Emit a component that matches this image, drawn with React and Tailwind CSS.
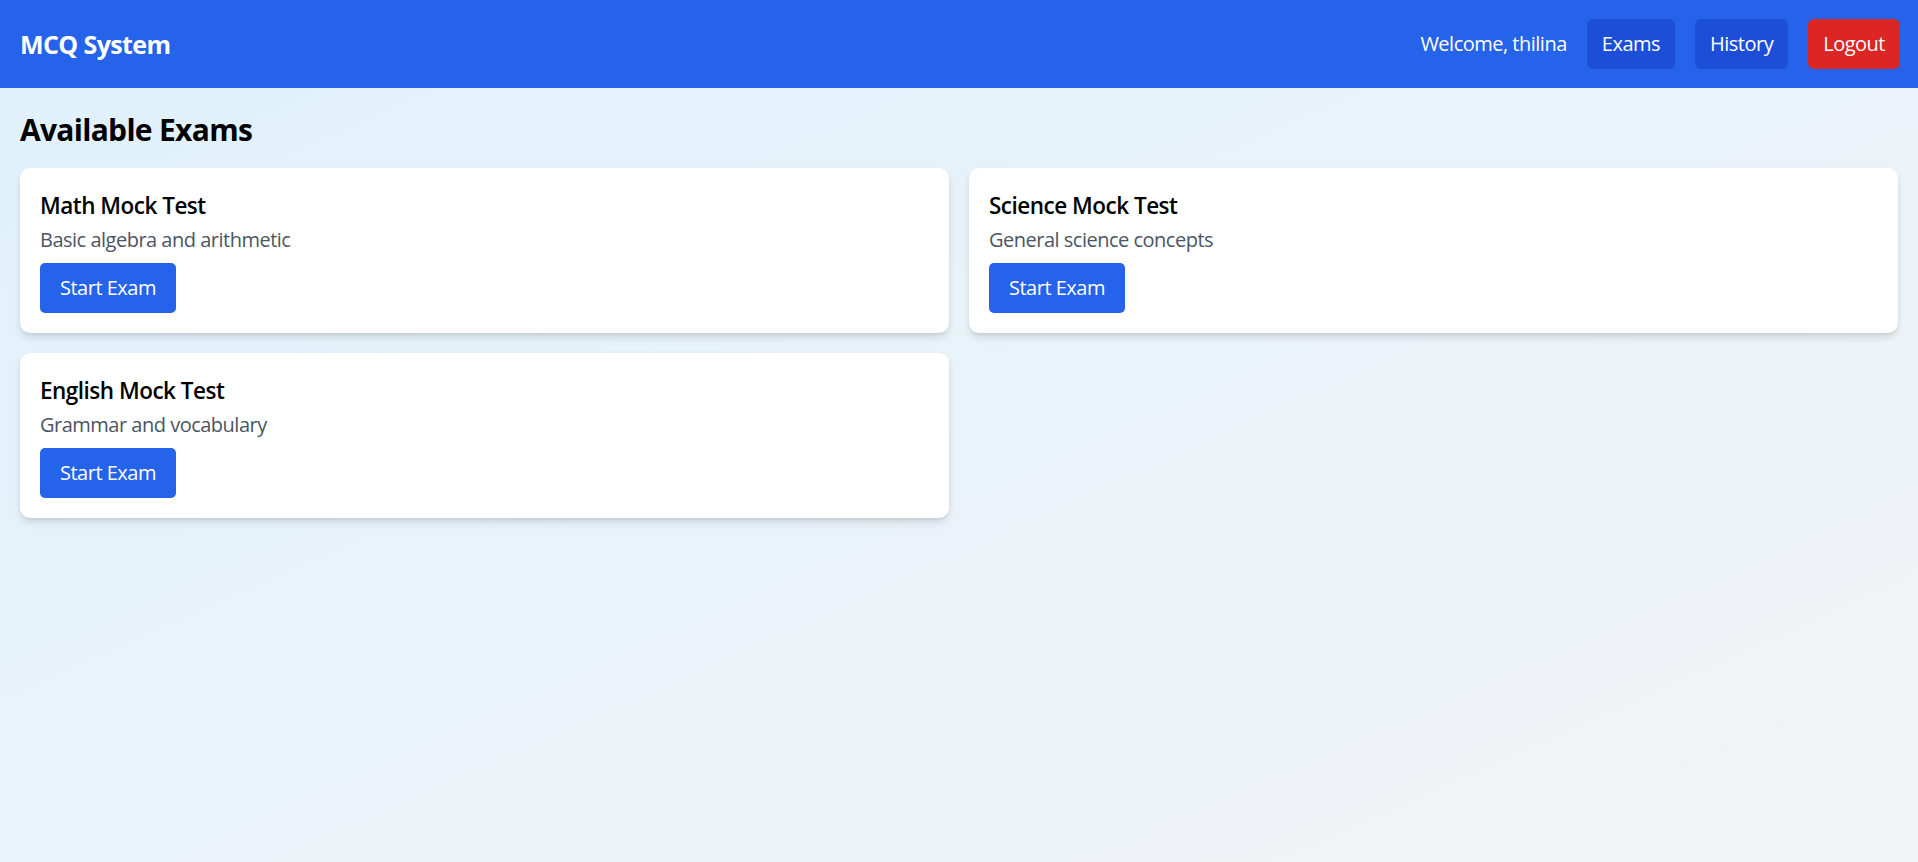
const exams = [
    { id: 1, title: 'Math Mock Test', description: 'Basic algebra and arithmetic' },
    { id: 2, title: 'Science Mock Test', description: 'General science concepts' },
    { id: 3, title: 'English Mock Test', description: 'Grammar and vocabulary' },
];

function Navbar() {
    return (
        <nav className="flex h-[88px] items-center justify-between bg-[#2563eb] pl-5 pr-[18px] text-white">
            <h1 className="text-[25px] font-bold leading-[35px] tracking-[-0.6px]">MCQ System</h1>
            <div className="flex items-center gap-5 text-[20px] leading-[30px] tracking-[-0.5px]">
                <span>Welcome, thilina</span>
                <button className="rounded-[6px] bg-[#1d4ed8] px-[15px] py-[10px]">Exams</button>
                <button className="rounded-[6px] bg-[#1d4ed8] px-[15px] py-[10px]">History</button>
                <button className="rounded-[6px] bg-[#dc2626] px-[15px] py-[10px]">Logout</button>
            </div>
        </nav>
    );
}

function ExamCard({ exam }) {
    return (
        <div className="rounded-[10px] bg-white p-5 shadow-[0_5px_8px_-1px_rgba(0,0,0,0.12),0_2px_5px_-2px_rgba(0,0,0,0.1)]">
            <h3 className="text-[22.5px] font-semibold leading-[35px] tracking-[-0.5px] text-black">{exam.title}</h3>
            <p className="pt-[2px] text-[20px] leading-[30px] tracking-[-0.5px] text-[#4b5563]">{exam.description}</p>
            <button className="mt-[8px] rounded-[5px] bg-[#2563eb] px-5 py-[10px] text-[20px] leading-[30px] tracking-[-0.5px] text-white">
                Start Exam
            </button>
        </div>
    );
}

export default function App() {
    return (
        <div
            className="min-h-[862px] bg-gradient-to-br from-[#dff1fc] to-[#f3f4f6]"
            style={{ fontFamily: '"Open Sans", "Noto Sans", sans-serif' }}
        >
            <Navbar />
            <main className="px-5 pt-[22px]">
                <h2 className="mb-[18px] text-[30px] font-bold leading-[40px] tracking-[-0.7px] text-black">Available Exams</h2>
                <div className="grid grid-cols-2 gap-5">
                    {exams.map((exam) => (
                        <ExamCard key={exam.id} exam={exam} />
                    ))}
                </div>
            </main>
        </div>
    );
}
